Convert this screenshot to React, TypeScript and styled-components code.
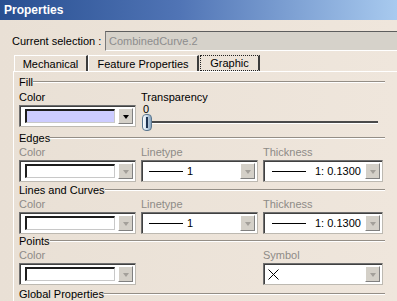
import React from 'react'
import styled, { createGlobalStyle } from 'styled-components'

const GlobalStyle = createGlobalStyle`
  html, body { margin: 0; padding: 0; background: #ece3d8; overflow: hidden; }
`

const Window = styled.div`
  width: 397px;
  height: 301px;
  overflow: hidden;
  display: flex;
  flex-direction: column;
  background: linear-gradient(90deg, #e9e0d5 0%, #efe6dc 100%);
  font-family: "Liberation Sans", Arial, sans-serif;
  font-size: 11px;
  color: #000;
`

const TitleBar = styled.div`
  flex: none;
  height: 20px;
  line-height: 20px;
  padding-left: 4px;
  background: linear-gradient(90deg, #284f91 0%, #5074b5 45%, #a8caef 100%);
  color: #fff;
  font-size: 12px;
  font-weight: bold;
`

const SelectionRow = styled.div`
  display: flex;
  align-items: center;
  height: 20px;
  margin-top: 11px;
`

const SelectionLabel = styled.div`
  flex: none;
  width: 93px;
  padding-left: 12px;
`

const DisabledField = styled.div`
  flex: 1;
  height: 20px;
  box-sizing: border-box;
  display: flex;
  align-items: center;
  padding-left: 3px;
  background: #d6d2ca;
  border-top: 1px solid #5e5e5e;
  border-left: 1px solid #7a7a7a;
  border-bottom: 1px solid #fff;
  color: #8d8d8d;
`

const TabStrip = styled.div`
  display: flex;
  height: 21px;
  margin: 4px 0 0 14px;
`

const Tab = styled.div<{ $w: number; $active?: boolean }>`
  width: ${p => p.$w}px;
  margin-left: ${p => (p.$active ? 1 : 0)}px;
  box-sizing: border-box;
  display: flex;
  align-items: center;
  justify-content: center;
  border-top: 1px ${p => (p.$active ? 'dotted #222' : 'solid #fff')};
  border-left: 1px ${p => (p.$active ? 'dotted #222' : 'solid #fff')};
  border-bottom: ${p => (p.$active ? '1px dotted #222' : 'none')};
  border-right: 2px solid #3c3c3c;
`

const Panel = styled.div`
  flex: 1;
  margin-left: 13px;
  padding: 3px 0 0 5px;
  border-top: 1px solid #fff;
  border-left: 1px solid #fff;
  display: flex;
  flex-direction: column;
`

const Section = styled.div<{ $mt?: number }>`
  width: 366px;
  margin-top: ${p => p.$mt ?? 0}px;
`

const SectionHeader = styled.div`
  display: flex;
  align-items: center;
  height: 14px;
  line-height: 14px;

  &::after {
    content: '';
    flex: 1;
    height: 0;
    border-top: 1px solid #948e86;
    border-bottom: 1px solid #fff;
  }
`

const Row = styled.div<{ $mt?: number }>`
  display: grid;
  grid-template-columns: 117px 117px 120px;
  column-gap: 5px;
  margin-top: ${p => p.$mt ?? 0}px;
`

const Field = styled.div<{ $col?: string }>`
  display: flex;
  flex-direction: column;
  gap: 1px;
  grid-column: ${p => p.$col ?? 'auto'};
`

const FieldLabel = styled.div<{ $disabled?: boolean }>`
  height: 14px;
  line-height: 14px;
  color: ${p => (p.$disabled ? '#8e8b87' : '#000')};
`

const Combo = styled.div<{ $pl?: number }>`
  height: 22px;
  box-sizing: border-box;
  display: flex;
  align-items: center;
  padding: 0 2px 0 ${p => p.$pl ?? 2}px;
  background: #fff;
  border: 1px solid;
  border-color: #6f6f6f #bdb9b1 #bdb9b1 #6f6f6f;
  box-shadow: inset 1px 1px 0 #404040;
`

const ComboBody = styled.div`
  flex: 1;
  display: flex;
  align-items: center;
  min-width: 0;
`

const Swatch = styled.div<{ $color: string }>`
  width: 90px;
  height: 14px;
  box-sizing: border-box;
  background: ${p => p.$color};
  border-top: 2px solid #1e1e1e;
  border-left: 2px solid #1e1e1e;
  border-right: 1px solid #c8c8c8;
  border-bottom: 1px solid #c8c8c8;
`

const DropButton = styled.div<{ $disabled?: boolean }>`
  flex: none;
  width: 15px;
  height: 16px;
  box-sizing: border-box;
  display: flex;
  align-items: center;
  justify-content: center;
  background: #d4d0c8;
  border: 1px solid;
  border-color: #fff #808080 #808080 #fff;

  &::after {
    content: '';
    width: 0;
    height: 0;
    margin-top: 1px;
    border-left: 3.5px solid transparent;
    border-right: 3.5px solid transparent;
    border-top: 4px solid ${p => (p.$disabled ? '#a3a09a' : '#000')};
  }
`

const LineSample = styled.div<{ $w: number }>`
  width: ${p => p.$w}px;
  height: 1px;
  background: #000;
`

const ComboText = styled.span<{ $ml: number }>`
  margin-left: ${p => p.$ml}px;
  white-space: nowrap;
`

const SliderField = styled.div`
  grid-column: 2 / span 2;
  display: flex;
  flex-direction: column;
`

const SliderValue = styled.div`
  height: 10px;
  line-height: 10px;
  padding-left: 2px;
`

const SliderBody = styled.div`
  position: relative;
  height: 17px;
`

const Track = styled.div`
  margin: 7px 5px 0 9px;
  height: 2px;
  background: #4a4a4a;
  border-bottom: 1px solid #fff;
`

const Thumb = styled.div`
  position: absolute;
  left: 1px;
  top: 0;
  width: 10px;
  height: 17px;
  box-sizing: border-box;
  border-radius: 4px;
  border: 1px solid #5d7890;
  background: linear-gradient(90deg, #ffffff 0%, #d3e1ee 40%, #86a3be 100%);

  &::after {
    content: '';
    position: absolute;
    left: 3px;
    top: 2px;
    width: 2px;
    height: 11px;
    background: #1f3350;
  }
`

const SymbolCross = () => (
  <svg width="11" height="11" viewBox="0 0 11 11">
    <path d="M0.5 0.5 L10.5 10.5 M10.5 0.5 L0.5 10.5" stroke="#000" strokeWidth="1" fill="none" />
  </svg>
)

const ColorCombo = ({ color, disabled }: { color: string; disabled?: boolean }) => (
  <Combo $pl={5}>
    <ComboBody>
      <Swatch $color={color} />
    </ComboBody>
    <DropButton $disabled={disabled} />
  </Combo>
)

const LinetypeCombo = () => (
  <Combo $pl={7}>
    <ComboBody>
      <LineSample $w={34} />
      <ComboText $ml={4}>1</ComboText>
    </ComboBody>
    <DropButton $disabled />
  </Combo>
)

const ThicknessCombo = () => (
  <Combo $pl={8}>
    <ComboBody>
      <LineSample $w={34} />
      <ComboText $ml={9}>1: 0.1300</ComboText>
    </ComboBody>
    <DropButton $disabled />
  </Combo>
)

const LineRow = () => (
  <Row>
    <Field>
      <FieldLabel $disabled>Color</FieldLabel>
      <ColorCombo color="#fff" disabled />
    </Field>
    <Field>
      <FieldLabel $disabled>Linetype</FieldLabel>
      <LinetypeCombo />
    </Field>
    <Field>
      <FieldLabel $disabled>Thickness</FieldLabel>
      <ThicknessCombo />
    </Field>
  </Row>
)

export default function App() {
  return (
    <>
      <GlobalStyle />
      <Window>
        <TitleBar>Properties</TitleBar>
        <SelectionRow>
          <SelectionLabel>Current selection :</SelectionLabel>
          <DisabledField>CombinedCurve.2</DisabledField>
        </SelectionRow>
        <TabStrip>
          <Tab $w={74}>Mechanical</Tab>
          <Tab $w={111}>Feature Properties</Tab>
          <Tab $w={60} $active>Graphic</Tab>
        </TabStrip>
        <Panel>
          <Section>
            <SectionHeader>Fill</SectionHeader>
            <Row $mt={1}>
              <Field>
                <FieldLabel>Color</FieldLabel>
                <ColorCombo color="#ccccff" />
              </Field>
              <SliderField>
                <FieldLabel>Transparency</FieldLabel>
                <SliderValue>0</SliderValue>
                <SliderBody>
                  <Track />
                  <Thumb />
                </SliderBody>
              </SliderField>
            </Row>
          </Section>
          <Section>
            <SectionHeader>Edges</SectionHeader>
            <LineRow />
          </Section>
          <Section $mt={1}>
            <SectionHeader>Lines and Curves</SectionHeader>
            <LineRow />
          </Section>
          <Section>
            <SectionHeader>Points</SectionHeader>
            <Row>
              <Field>
                <FieldLabel $disabled>Color</FieldLabel>
                <ColorCombo color="#fff" disabled />
              </Field>
              <Field $col="3">
                <FieldLabel $disabled>Symbol</FieldLabel>
                <Combo $pl={4}>
                  <ComboBody>
                    <SymbolCross />
                  </ComboBody>
                  <DropButton $disabled />
                </Combo>
              </Field>
            </Row>
          </Section>
          <Section $mt={2}>
            <SectionHeader>Global Properties</SectionHeader>
          </Section>
        </Panel>
      </Window>
    </>
  )
}
